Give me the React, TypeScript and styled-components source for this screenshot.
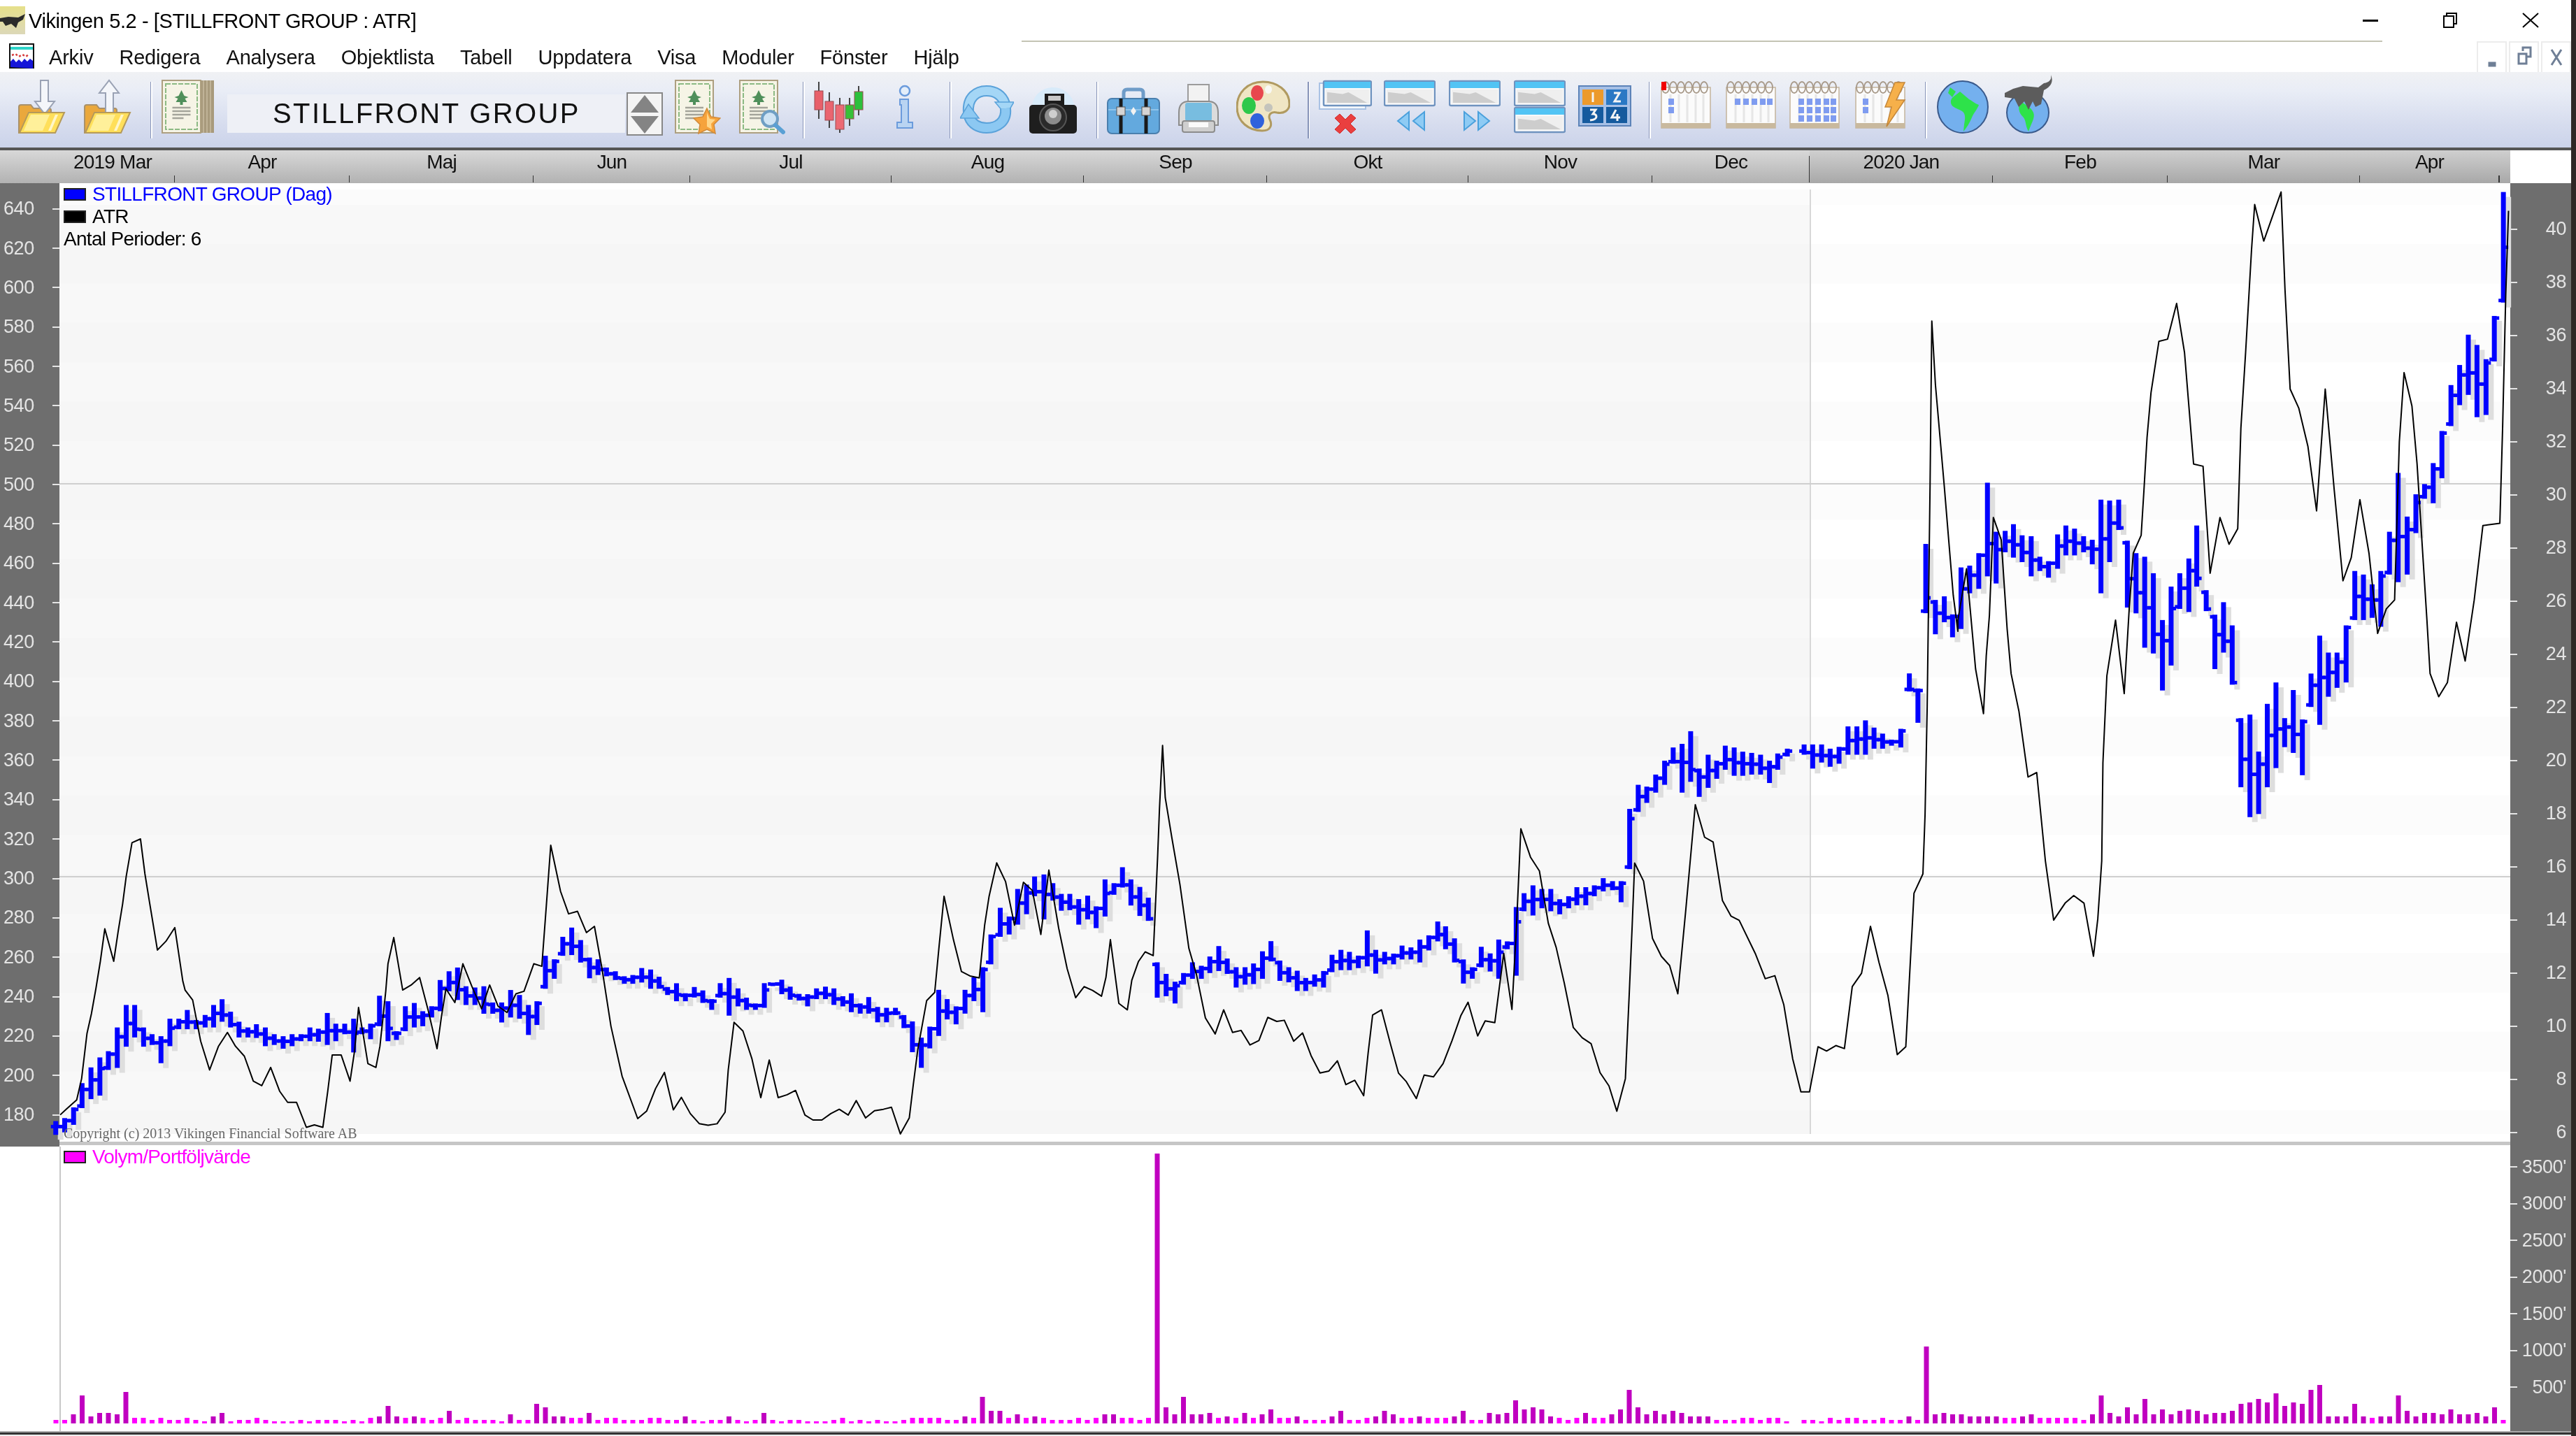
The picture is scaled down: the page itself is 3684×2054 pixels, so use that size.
import React from 'react';
import styled, { createGlobalStyle } from 'styled-components';

const GlobalStyle = createGlobalStyle`
  html, body { margin: 0; padding: 0; background: #2e2826; overflow: hidden; }
  * { box-sizing: border-box; }
`;

const sans = `"Liberation Sans", Arial, sans-serif`;

const Page = styled.div`
  width: 3684px;
  height: 2054px;
  display: flex;
  justify-content: flex-start;
  background: #2e2826;
  overflow: hidden;
  font-family: ${sans};
`;

/* the reference is an upscaled capture, everything in it is slightly soft */
const Win = styled.div`
  position: relative;
  width: 3677px;
  height: 2054px;
  display: flex;
  flex-direction: column;
  background: #fff;
  filter: blur(0.5px);
`;

const TitleBar = styled.div`
  height: 52px;
  padding-top: 6px;
  display: flex;
  align-items: center;
  font-size: 29px;
  letter-spacing: -0.4px;
  color: #000;
`;

const TitleText = styled.span`
  margin: 2px 0 0 5px;
`;

const TitleRule = styled.div`
  position: absolute;
  left: 1461px;
  top: 58px;
  width: 1946px;
  height: 2px;
  background: #c4c4b4;
`;

const WinButtons = styled.div`
  margin-left: auto;
  display: flex;
  align-items: center;
  gap: 92px;
  padding-right: 46px;
`;

const MenuBar = styled.div`
  height: 51px;
  padding: 5px 0 0 13px;
  display: flex;
  align-items: center;
  font-size: 29px;
  letter-spacing: -0.2px;
  color: #111;
`;

const MenuItem = styled.span`
  margin: 4px 0 0 ${p => p.$ml ?? 37}px;
  white-space: nowrap;
`;

const MdiButtons = styled.div`
  margin-left: auto;
  align-self: flex-end;
  display: flex;
  gap: 3px;
`;

const MdiButton = styled.div`
  width: 43px;
  height: 44px;
  border: 2px solid #ececec;
  border-bottom: 0;
  display: flex;
  align-items: center;
  justify-content: center;
`;

const Toolbar = styled.div`
  height: 112px;
  display: flex;
  align-items: flex-start;
  background: linear-gradient(#f0f1f4 0, #e9edf6 25%, #d6dcee 70%, #cbd3ea 100%);
  border-bottom: 4px solid #555;
`;

const ToolIcon = styled.svg`
  flex: none;
  height: 108px;
  margin-left: ${p => p.$ml ?? 0}px;
`;

const ToolSep = styled.div`
  flex: none;
  width: 3px;
  height: 81px;
  margin: 14px 0 0 ${p => p.$ml}px;
  background: linear-gradient(90deg, #8794b8 0 50%, #fff 50%);
`;

const NameField = styled.div`
  flex: none;
  width: 569px;
  height: 55px;
  margin: 32px 0 0 18px;
  padding-left: 65px;
  background: #eef0f6;
  font-size: 40px;
  line-height: 55px;
  letter-spacing: 2.4px;
  color: #111;
  white-space: nowrap;
`;

const DateRow = styled.div`
  height: 47px;
  display: flex;
  background: #fff;
`;

const DateTrack = styled.div`
  width: 3590px;
  display: flex;
  padding-left: 72px;
`;

const DateCell = styled.div`
  position: relative;
  flex: none;
  width: ${p => p.$w}px;
  text-align: center;
  font-size: 28px;
  line-height: 33px;
  letter-spacing: -0.8px;
  color: #111;
  background: ${p =>
    p.$late
      ? 'linear-gradient(#cfcfcf, #a8a8a8)'
      : 'linear-gradient(#d8d8d8, #b2b2b2)'};
  &::after {
    content: '';
    position: absolute;
    right: -1px;
    bottom: 1px;
    width: 2px;
    height: ${p => (p.$year ? 38 : 10)}px;
    background: #333;
  }
`;

const DateLead = styled.div`
  width: 72px;
  margin-left: -72px;
  background: linear-gradient(#d8d8d8, #b2b2b2);
`;

const DateTail = styled.div`
  flex: 1;
  background: linear-gradient(#cfcfcf, #a8a8a8);
`;

const PriceRow = styled.div`
  height: 1378px;
  display: flex;
`;

const Axis = styled.div`
  flex: none;
  width: ${p => p.$w}px;
  background: #6e6e6e;
  color: #e4e4e4;
  overflow: hidden;
  padding-top: ${p => p.$top}px;
  font-size: 27px;
  letter-spacing: -0.4px;
`;

const AxisRow = styled.div`
  height: ${p => p.$h}px;
  display: flex;
  align-items: center;
  justify-content: space-between;
  padding: ${p => (p.$left ? '0 0 0 5px' : '0 7px 0 0')};
`;

const AxisTick = styled.i`
  display: block;
  width: 10px;
  height: 2px;
  background: #e4e4e4;
`;

const PriceMain = styled.div`
  flex: 1;
  display: flex;
  flex-direction: column;
`;

const Plot = styled.div`
  position: relative;
  height: 1371px;
  display: flex;
  padding: 9px 0 11px;
  background: #fff;
`;

const Zone = styled.div`
  width: ${p => p.$w}px;
  border-left: ${p => (p.$edge ? '2px solid #d8d8d8' : '0')};
  background:
    linear-gradient(${p => p.$top}, ${p => p.$top}) 0 0 / 100% 22px no-repeat,
    linear-gradient(${p => p.$a} 50%, ${p => p.$b} 50%) 0 22px / 100% 112.7px repeat-y;
`;

const ChartSvg = styled.svg`
  position: absolute;
  left: 0;
  top: 0;
  width: 100%;
  height: 100%;
  overflow: visible;
`;

const Legend = styled.div`
  position: absolute;
  left: 6px;
  top: 0;
  font-size: 28px;
  line-height: 32px;
  letter-spacing: -0.7px;
`;

const LegendRow = styled.div`
  display: flex;
  align-items: center;
  color: ${p => p.$color};
  white-space: nowrap;
`;

const Swatch = styled.i`
  display: block;
  width: 32px;
  height: 18px;
  margin-right: 9px;
  background: ${p => p.$color};
  border: 2px solid #222;
`;

const Copyright = styled.div`
  position: absolute;
  left: 6px;
  bottom: 1px;
  font-family: "Liberation Serif", serif;
  font-size: 20px;
  line-height: 22px;
  color: #666;
  white-space: nowrap;
`;

const Divider = styled.div`
  height: 5px;
  background: #c6c6c6;
`;

const VolumeRow = styled.div`
  height: 407px;
  display: flex;
`;

const VolumeGutter = styled.div`
  flex: none;
  width: 87px;
  border-right: 2px solid #c8c8c8;
  background: #fff;
`;

const VolumePlot = styled.div`
  position: relative;
  flex: 1;
  background: #fff;
`;

const VolumeLegend = styled.div`
  position: absolute;
  left: 4px;
  top: 0;
  display: flex;
  align-items: center;
  height: 30px;
  font-size: 28px;
  letter-spacing: -0.8px;
  color: #ff00ff;
  white-space: nowrap;
`;

const BottomEdge = styled.div`
  flex: 1;
  border-top: 2px solid #aaa;
  background: linear-gradient(#333 0 3px, #eee 3px);
`;

/* --- data, read off the chart; every run is [x, top, bottom] in the units of its crop --- */

const chunk = (a: number[], n: number) => {
  const out: number[][] = [];
  for (let i = 0; i < a.length; i += n) out.push(a.slice(i, i + n));
  return out;
};

const bars = (fx: number, ox: number, fy: number, oy: number, a: number[]) =>
  chunk(a, 3).map(([x, t, b]) => [ox + x / fx, oy + t / fy, oy + b / fy]);

const line = (fx: number, ox: number, fy: number, oy: number, a: number[]) =>
  chunk(a, 2).map(([x, y]) => [ox + x / fx, oy + y / fy]);

const ohlc = [
  ...bars(1.568, 0, 2.8, 1100, [
    125,1410,1465, 145,1398,1455, 165,1355,1425, 184,1258,1358, 204,1195,1322, 224,1155,1308, 243,1130,1205, 263,1035,1197,
    283,945,1112, 302,945,1075, 322,1035,1112, 341,1062,1105, 361,1070,1178, 381,1000,1110, 401,1000,1042, 420,965,1042,
    440,1005,1042, 460,985,1035, 479,945,1035, 498,922,1012, 517,972,1035, 536,1012,1075, 556,1035,1075, 575,1022,1077,
    595,1035,1110, 615,1062,1105, 635,1070,1120, 655,1062,1110, 675,1062,1090, 695,1035,1090, 714,1040,1092, 734,977,1105,
    753,1020,1090, 773,1020,1062, 793,1000,1135, 812,1035,1062, 831,1020,1082, 851,908,1030, 870,930,1090, 889,1050,1085,
    909,950,1050, 929,937,1035, 948,970,1030, 968,950,995, 987,845,970, 1007,810,890, 1026,795,925, 1045,870,945,
    1065,875,945, 1085,870,980, 1105,935,980, 1125,935,1015, 1145,885,995, 1165,905,1000, 1185,945,1065, 1204,930,1025,
    1223,748,880, 1243,762,840, 1262,672,748, 1282,635,745, 1302,685,775, 1322,755,838, 1341,762,825, 1360,795,830,
    1380,810,845, 1400,830,860, 1419,825,860, 1439,797,855, 1459,803,880, 1478,832,880, 1497,873,905, 1517,858,930,
    1537,898,930, 1557,873,915,
  ]),
  ...bars(1.568, 1000, 2.412, 1000, [
    8,1005,1048, 28,1035,1072, 47,980,1030, 67,962,1092, 87,998,1060, 106,1030,1072, 126,1050,1072, 146,980,1065,
    165,978,990, 185,968,1018, 204,992,1037, 224,1017,1040, 243,1018,1060, 263,998,1035, 283,992,1035, 302,998,1055,
    322,1025,1060, 341,1015,1080, 361,1050,1085, 380,1028,1085, 400,1062,1115, 420,1065,1115, 440,1065,1090, 459,1090,1135,
    478,1112,1218, 498,1168,1272, 517,1130,1205, 537,1003,1162, 556,1035,1105, 576,1060,1122, 596,1003,1085, 616,960,1042,
    636,925,1080, 654,812,915, 675,720,820, 695,750,812, 714,655,778, 734,640,742, 752,612,680, 773,605,760,
    793,635,695, 812,672,730, 831,672,728, 851,690,778, 871,678,760, 890,715,790, 910,622,750, 930,635,675,
    949,580,650, 968,622,712, 988,648,748, 1007,685,765, 1027,908,1030, 1047,948,1025, 1067,975,1050, 1086,945,985,
    1106,908,965, 1126,920,965, 1145,888,945, 1165,852,938, 1184,895,948, 1204,925,995, 1224,925,985, 1243,912,983,
    1263,870,965, 1282,835,905, 1302,902,972, 1322,925,977, 1341,937,1007, 1360,962,1007, 1380,950,992, 1400,938,995,
    1419,882,942, 1439,865,935, 1458,872,935, 1478,885,928, 1498,798,922, 1517,865,947, 1537,872,915, 1557,878,915,
  ]),
  ...bars(1.96, 2000, 1.161, 300, [
    10,1222,1245, 35,1225,1245, 60,1212,1250, 85,1205,1230, 110,1182,1215, 132,1190,1228, 157,1210,1250, 182,1245,1285,
    207,1258,1277, 232,1224,1258, 257,1235,1265, 281,1212,1277, 305,1215,1228, 330,1158,1272, 352,1135,1165, 377,1122,1172,
    402,1128,1160, 427,1128,1165, 452,1145,1170, 477,1140,1160, 500,1125,1155, 525,1125,1155, 549,1122,1140, 574,1110,1132,
    600,1115,1130, 624,1115,1150, 648,995,1095, 672,955,1000, 696,958,985, 721,938,968, 746,915,955, 770,893,920,
    795,887,968, 819,866,950, 843,928,975, 868,905,960, 892,915,945, 916,890,930, 941,893,940, 965,900,940,
    990,902,938, 1015,905,938, 1040,915,952, 1063,903,930, 1090,895,908, 1137,888,905, 1161,888,928, 1186,888,918,
    1210,895,925, 1235,892,920, 1260,858,905, 1285,858,905, 1309,848,905, 1333,860,895, 1357,870,895, 1382,880,890,
    1408,862,893, 1432,770,800, 1456,795,852, 1478,555,670, 1505,648,705, 1530,642,685, 1553,672,710,
  ]),
  ...bars(1.774, 2800, 1.568, 230, [
    8,912,1050, 30,908,970, 53,880,960, 75,722,932, 97,832,948, 120,830,878, 141,815,890, 163,840,900,
    186,842,932, 208,888,920, 230,898,935, 253,838,915, 274,818,885, 296,825,885, 319,842,878, 341,850,905,
    363,760,970, 385,762,900, 408,760,828, 430,852,1002, 452,880,1015, 474,888,1092, 496,925,1105, 519,1030,1188,
    541,955,1132, 563,925,1005, 586,892,1012, 606,818,955, 630,963,1010, 652,1018,1140, 674,990,1103, 696,1042,1175,
    718,1250,1405, 741,1242,1472, 763,1325,1465, 785,1218,1405, 807,1170,1362, 829,1250,1315, 851,1187,1328, 874,1253,1378,
    896,1150,1225, 918,1065,1265, 940,1103,1202, 962,1103,1182, 985,1042,1170, 1007,920,1030, 1029,928,1030, 1051,950,1025,
    1073,920,1045, 1095,832,928, 1117,700,945, 1140,798,928, 1162,748,835, 1184,725,758, 1206,678,768, 1228,606,712,
    1251,503,595, 1273,458,548, 1295,390,525, 1317,413,575, 1340,445,570, 1361,348,450, 1384,70,318,
  ]),
];

const atr = [
  ...line(1.568, 0, 2.8, 1100, [
    135,1385, 150,1360, 172,1325, 183,1240, 195,1060, 205,980, 215,880, 225,770, 235,640, 255,770, 265,650, 275,540,
    283,430, 296,295, 315,280, 325,420, 335,530, 353,725, 372,690, 392,635, 410,850, 415,885, 432,925, 450,1090,
    470,1205, 490,1110, 510,1055, 528,1110, 548,1150, 568,1250, 587,1268, 607,1195, 627,1290, 645,1335, 665,1335, 687,1435,
    705,1425, 724,1435, 735,1290, 745,1145, 765,1145, 785,1250, 795,1130, 804,955, 815,1070, 825,1180, 843,1195, 852,1110,
    865,890, 870,780, 883,675, 903,885, 922,865, 941,835, 960,965, 980,1120, 990,990, 1000,880, 1020,935, 1038,780,
    1058,870, 1080,960, 1098,865, 1117,950, 1137,975, 1157,900, 1175,890, 1197,780, 1215,790, 1225,550, 1235,305, 1257,490,
    1275,580, 1295,570, 1315,655, 1333,630, 1350,800, 1370,1030, 1395,1230, 1430,1400, 1450,1370, 1470,1280, 1490,1215, 1510,1365,
    1528,1315, 1548,1380, 1568,1420,
  ]),
  ...line(1.568, 1000, 2.412, 1000, [
    20,1470, 40,1465, 58,1425, 65,1280, 78,1115, 98,1145, 118,1240, 138,1375, 157,1245, 177,1375, 197,1365, 216,1350,
    237,1435, 255,1452, 275,1452, 295,1430, 314,1415, 334,1435, 352,1385, 373,1445, 393,1420, 413,1415, 431,1408, 451,1500,
    471,1445, 480,1330, 490,1210, 510,1040, 528,1012, 538,850, 549,680, 570,830, 588,940, 607,955, 628,962, 640,780,
    650,680, 667,565, 687,630, 707,780, 727,632, 747,660, 766,812, 784,590, 806,790, 825,930, 844,1030, 863,992,
    882,1005, 902,1025, 912,960, 922,830, 941,1050, 960,1072, 970,970, 985,905, 1000,872, 1018,885, 1028,540, 1032,380,
    1039,160, 1045,340, 1060,480, 1078,640, 1098,860, 1115,950, 1135,1100, 1157,1155, 1176,1072, 1196,1150, 1215,1143, 1235,1193,
    1255,1178, 1275,1098, 1295,1112, 1312,1108, 1333,1180, 1353,1152, 1372,1230, 1392,1290, 1412,1283, 1431,1248, 1450,1330, 1470,1315,
    1490,1368, 1500,1220, 1510,1090, 1530,1072, 1550,1190, 1568,1290,
  ]),
  ...line(1.96, 2000, 1.161, 300, [
    22,1448, 50,1476, 72,1437, 98,1440, 125,1418, 150,1380, 175,1338, 195,1316, 222,1372, 243,1347, 270,1350, 295,1235,
    318,1328, 330,1200, 343,1028, 370,1075, 395,1098, 420,1185, 442,1225, 465,1285, 490,1358, 515,1375, 540,1385, 565,1433,
    590,1455, 612,1497, 636,1443, 647,1300, 655,1190, 662,1085, 687,1115, 712,1210, 737,1240, 760,1255, 783,1302, 805,1165,
    832,988, 858,1042, 882,1050, 908,1147, 932,1173, 955,1180, 1000,1235, 1028,1277, 1055,1272, 1080,1320, 1105,1410, 1128,1465,
    1152,1465, 1176,1390, 1200,1397, 1226,1388, 1250,1393, 1272,1290, 1298,1268, 1323,1190, 1347,1250, 1372,1305, 1398,1403, 1422,1390,
    1445,1135, 1470,1103, 1476,1005, 1482,825, 1490,460, 1495,185, 1505,290, 1530,460, 1555,640, 1568,700,
  ]),
  ...line(1.774, 2800, 1.568, 230, [
    0,1030, 22,915, 45,1140, 65,1240, 72,1110, 80,1020, 90,800, 110,850, 125,1050, 135,1150, 155,1235, 178,1382,
    200,1372, 222,1570, 243,1703, 272,1665, 294,1648, 320,1665, 344,1784, 355,1700, 365,1570, 368,1350, 378,1155, 400,1030, 422,1195,
    435,1000, 445,880, 465,840, 472,740, 480,620, 490,520, 510,405, 532,400, 555,320, 575,430, 598,680, 622,685,
    640,925, 665,800, 688,860, 710,825, 718,600, 730,430, 745,200, 753,98, 776,180, 820,70, 830,290, 843,512,
    865,555, 888,640, 910,785, 932,512, 955,740, 977,942, 998,890, 1020,760, 1043,880, 1065,1060, 1087,1005, 1108,985,
    1120,630, 1132,475, 1152,550, 1165,680, 1190,1030, 1198,1150, 1220,1202, 1242,1170, 1265,1035, 1287,1122, 1310,985, 1332,818,
    1375,813, 1382,600, 1390,300, 1397,112,
  ]),
];

const volumes = [
  5,5,13,40,10,15,15,13,45,8, 8,5,8,5,5,8,5,3,10,15, 3,5,5,8,5,3,3,3,5,3, 5,5,5,3,5,3,8,10,25,10,
  8,10,8,5,8,18,5,8,5,5, 5,3,13,5,5,28,23,10,10,8, 8,15,5,8,8,5,5,5,8,8, 5,5,10,5,3,5,5,10,5,3,
  5,15,5,3,5,5,3,3,3,5, 8,3,5,3,5,3,3,
  5,8,8,8,8,5,5,10,8,38, 18,18,8,13,8,10,8,5,5,5, 8,5,8,13,13,8,8,5,8,386, 23,13,38,13,13,15,8,10,8,15,
  8,13,20,8,8,10,5,5,5,10, 18,5,
  5,8,10,18,13,8,8,10,8,8, 8,10,18,5,5,15,13,15,33,20, 23,20,10,8,5,8,15,8,8,13, 20,48,23,13,18,13,18,15,10,10,
  10,5,5,5,8,8,5,8,8,3, 0,5,5,3,
  8,5,8,8,5,5,8,5,5,10, 5,110,13,15,13,13,10,10,10,10, 8,8,10,13,8,8,8,8,8,5, 13,40,15,10,23,13,35,13,20,13,
  18,20,18,13,15,15,18,28,30,35, 30,43,25,30,28,48,55,10,10,10, 28,10,8,10,10,40,18,10,15,15, 13,20,13,13,15,10,23,5,
];

const priceLabels = Array.from({ length: 24 }, (_, i) => 640 - i * 20);
const atrLabels = Array.from({ length: 18 }, (_, i) => 40 - i * 2);
const volumeLabels = ["3500'", "3000'", "2500'", "2000'", "1500'", "1000'", "500'"];

const months: [string, number, boolean?, boolean?][] = [
  ['2019 Mar', 178], ['Apr', 250], ['Maj', 263], ['Jun', 224], ['Jul', 288], ['Aug', 275], ['Sep', 262], ['Okt', 288],
  ['Nov', 263], ['Dec', 225, false, true], ['2020 Jan', 262, true], ['Feb', 250, true], ['Mar', 275, true], ['Apr', 199, true],
];

const menus = ['Redigera', 'Analysera', 'Objektlista', 'Tabell', 'Uppdatera', 'Visa', 'Moduler', 'Fönster', 'Hjälp'];

/* --- chart drawings --- */

const PriceChart = () => {
  const mids = ohlc.map(b => (b[1] + b[2]) / 2);
  const closes = ohlc.map((b, i) => {
    const next = mids[i + 1] ?? mids[i];
    return Math.min(b[2] - 3, Math.max(b[1] + 3, (mids[i] + next) / 2));
  });
  return (
    <ChartSvg viewBox="85 262 3505 1371">
      <path d="M85 692H3590M85 1254H3590" stroke="#cfcfcf" strokeWidth="2" fill="none" />
      {ohlc.map(([x, t, b], i) => (
        <rect key={i} x={x + 3} y={t + 7} width={8} height={b - t} fill="#dedede" />
      ))}
      {ohlc.map(([x, t, b], i) => {
        const prev = closes[i - 1] ?? closes[i];
        const open = Math.min(b - 3, Math.max(t + 3, prev));
        return (
          <g key={i} fill="#0000ff">
            <rect x={x - 3.5} y={t} width={7} height={b - t} />
            <rect x={x - 7} y={open - 2.5} width={4} height={5} />
            <rect x={x + 3} y={closes[i] - 2.5} width={4} height={5} />
          </g>
        );
      })}
      <polyline
        points={atr.map(p => p.join(',')).join(' ')}
        fill="none"
        stroke="#000"
        strokeWidth="2"
        strokeLinejoin="round"
      />
    </ChartSvg>
  );
};

const VolumeChart = () => (
  <ChartSvg viewBox="87 1640 3503 407">
    {volumes.map((h, i) =>
      h > 0 ? (
        <rect
          key={i}
          x={76.5 + i * 12.5}
          y={2036 - h}
          width={7}
          height={h}
          fill={h >= 10 ? '#c000c0' : '#ff00ff'}
        />
      ) : null,
    )}
  </ChartSvg>
);

/* --- toolbar icons, drawn in toolbar pixels --- */

const Icon = ({ w, ml, children }: { w: number; ml?: number; children: React.ReactNode }) => (
  <ToolIcon $ml={ml} width={w} viewBox={`0 0 ${w} 108`}>
    {children}
  </ToolIcon>
);

const FolderArrow = ({ ml, up }: { ml?: number; up?: boolean }) => (
  <Icon w={69} ml={ml}>
    <path d="M2 87V50q0-3 3-3h14l4 5h22q3 0 3 3v32z" fill="#eaa83c" stroke="#a9916a" strokeWidth="2" />
    <path
      d={up ? 'M32 60V30H23L37 12 51 30H43V60z' : 'M33 12H44V42H53L39 60 25 42H33z'}
      fill="#f4f6fa"
      stroke="#9aa2b4"
      strokeWidth="2"
    />
    <path d="M3 87L16 58H67L54 87z" fill="#ffdf5a" stroke="#b59a5a" strokeWidth="2" />
    <path d="M9 84L19 61H46L36 84z" fill="#fff09a" />
    <path d="M44 84L54 61H58L48 84z" fill="#fff6c8" />
  </Icon>
);

const CertBody = ({ w }: { w: number }) => {
  const c = w / 2 + 1;
  return (
    <>
      <rect x="1" y="12" width={w} height="75" fill="#f6f4e6" stroke="#ad9f80" strokeWidth="2" />
      <rect
        x="6"
        y="17"
        width={w - 10}
        height="65"
        fill="none"
        stroke="#8cba84"
        strokeWidth="2"
        strokeDasharray="7 2"
      />
      <path
        d={`M${c} 26L${c + 4} 34 ${c + 10} 36 ${c + 5} 38 ${c + 8} 43H${c + 2}V47H${c - 2}V43H${c - 8}L${c - 5} 38 ${c - 10} 36 ${c - 4} 34z`}
        fill="#4f8f5a"
      />
      <path
        d={`M${c - 13} 51H${c + 13}M${c - 13} 56H${c + 13}M${c - 13} 61H${c + 13}M${c - 13} 66H${c + 3}`}
        stroke="#a4a49a"
        strokeWidth="2.5"
      />
    </>
  );
};

const Certificate = ({ ml }: { ml?: number }) => (
  <Icon w={76} ml={ml}>
    <rect x="52" y="12" width="23" height="75" fill="#a89a7c" />
    <path d="M60 12V87M65 12V87M70 12V87" stroke="#c8bca0" strokeWidth="1.5" />
    <CertBody w={55} />
  </Icon>
);

const CertStar = ({ ml }: { ml?: number }) => (
  <Icon w={66} ml={ml}>
    <CertBody w={54} />
    <path
      d="M46 52l6 12 13 2-9 9 2 13-12-6-12 6 2-13-9-9 13-2z"
      fill="#f6a33c"
      stroke="#d08a3a"
      strokeWidth="1.5"
    />
    <path d="M46 58l4 9 8 1-6 6 1 8-7-4z" fill="#ffd78a" />
  </Icon>
);

const CertSearch = ({ ml }: { ml?: number }) => (
  <Icon w={66} ml={ml}>
    <CertBody w={54} />
    <circle cx="44" cy="67" r="11" fill="#cfe4f4" stroke="#6f9fc4" strokeWidth="4" />
    <path d="M52 76L63 86" stroke="#5aa0d4" strokeWidth="6" strokeLinecap="round" />
  </Icon>
);

const Spinner = () => (
  <Icon w={52} ml={2}>
    <rect x="1" y="30" width="50" height="60" fill="#f4f4f4" stroke="#888" strokeWidth="2" />
    <path d="M26 33L46 58H6z" fill="#848484" />
    <path d="M26 88L46 63H6z" fill="#848484" />
  </Icon>
);

const Candles = ({ ml }: { ml?: number }) => {
  const c: [number, number, number, number, number, string][] = [
    [8, 14, 67, 27, 54, '#e8606a'],
    [23, 29, 80, 42, 69, '#ea6570'],
    [38, 37, 87, 47, 82, '#ec6a74'],
    [52, 37, 77, 47, 67, '#38c038'],
    [65, 20, 62, 28, 54, '#2cc03c'],
  ];
  return (
    <Icon w={76} ml={ml}>
      {c.map(([x, a, b, t, u, f]) => (
        <g key={x}>
          <path d={`M${x} ${a}V${b}`} stroke="#444" strokeWidth="2" />
          <rect x={x - 6} y={t} width="12" height={u - t} fill={f} stroke="#9a4a50" strokeWidth="1" />
        </g>
      ))}
    </Icon>
  );
};

const InfoMark = ({ ml }: { ml?: number }) => (
  <Icon w={30} ml={ml}>
    <circle cx="14" cy="27" r="7" fill="#e4eefa" stroke="#6b9bdc" strokeWidth="2.5" />
    <path
      d="M7 39H19V72H25V80H3V72H9V47H7z"
      fill="#b9d4f2"
      stroke="#6b9bdc"
      strokeWidth="2"
    />
  </Icon>
);

const Refresh = ({ ml }: { ml?: number }) => (
  <Icon w={77} ml={ml}>
    <path d="M12 58C10 36 24 27 38 27c12 0 22 6 26 18" fill="none" stroke="#5aa2da" strokeWidth="16" />
    <path d="M12 58C10 36 24 27 38 27c12 0 22 6 26 18" fill="none" stroke="#a4d6f6" strokeWidth="12" />
    <path d="M50 43H77L66 62z" fill="#a4d6f6" stroke="#5aa2da" strokeWidth="1.5" />
    <path d="M65 52c2 20-13 28-27 28-11 0-21-5-25-16" fill="none" stroke="#5aa2da" strokeWidth="16" />
    <path d="M65 52c2 20-13 28-27 28-11 0-21-5-25-16" fill="none" stroke="#8cc8f2" strokeWidth="12" />
    <path d="M0 66H27L12 46z" fill="#8cc8f2" stroke="#5aa2da" strokeWidth="1.5" />
  </Icon>
);

const Camera = ({ ml }: { ml?: number }) => (
  <Icon w={71} ml={ml}>
    <path d="M6 48C8 32 22 22 36 22s28 10 30 26z" fill="#d8ebfa" />
    <rect x="24" y="31" width="28" height="16" fill="#1c1c1c" />
    <rect x="29" y="34" width="18" height="7" fill="#c8c8c8" />
    <rect x="2" y="47" width="68" height="41" rx="5" fill="#1e1e1e" />
    <circle cx="36" cy="65" r="19" fill="#2a2a2a" stroke="#555" strokeWidth="2" />
    <circle cx="36" cy="63" r="12" fill="#8c8c8c" />
    <circle cx="36" cy="60" r="6" fill="#cfcfcf" />
  </Icon>
);

const Briefcase = ({ ml }: { ml?: number }) => (
  <Icon w={76} ml={ml}>
    <path d="M24 38V30q0-5 5-5h18q5 0 5 5v8" fill="none" stroke="#6f9cc8" strokeWidth="5" />
    <rect x="1" y="38" width="74" height="50" rx="6" fill="#63a9de" stroke="#4a7fae" strokeWidth="2" />
    <path d="M2 54H74" stroke="#8fc4ea" strokeWidth="2" />
    <path d="M20 38V88M56 38V88" stroke="#1a1a1a" strokeWidth="5" />
    <rect x="14" y="50" width="12" height="12" fill="#d4d4d4" stroke="#555" />
    <rect x="50" y="50" width="12" height="12" fill="#d4d4d4" stroke="#555" />
    <path d="M38 50l4 6-4 6-4-6z" fill="#f2f2f2" />
  </Icon>
);

const Printer = ({ ml }: { ml?: number }) => (
  <Icon w={60} ml={ml}>
    <rect x="15" y="18" width="30" height="26" fill="#f2f2f2" stroke="#9c9c9c" strokeWidth="2" />
    <path d="M2 58q0-16 14-16h28q14 0 14 16v18H2z" fill="#dcdcdc" stroke="#8c8c8c" strokeWidth="2" />
    <rect x="11" y="44" width="38" height="26" rx="3" fill="#78bde0" />
    <rect x="7" y="70" width="46" height="16" rx="3" fill="#cfcfcf" stroke="#8c8c8c" strokeWidth="2" />
    <rect x="16" y="72" width="28" height="7" fill="#fafafa" />
  </Icon>
);

const Palette = ({ ml }: { ml?: number }) => (
  <Icon w={77} ml={ml}>
    <path
      d="M38 14C16 14 1 30 1 50c0 22 18 34 36 34 14 0 14-10 11-16-3-7 2-12 10-10 10 2 18-3 18-12C76 26 58 14 38 14z"
      fill="#f0e6c4"
      stroke="#b09a60"
      strokeWidth="3"
    />
    <ellipse cx="30" cy="30" rx="9" ry="11" fill="#e8474e" />
    <ellipse cx="46" cy="25" rx="5" ry="6" fill="#f8f8f4" />
    <ellipse cx="18" cy="48" rx="10" ry="12" fill="#2ec84a" />
    <ellipse cx="46" cy="51" rx="6" ry="6" fill="#c4c4bc" />
    <ellipse cx="30" cy="70" rx="10" ry="11" fill="#2f62dc" />
  </Icon>
);

const MiniWindow = ({ x, y, w, h }: { x: number; y: number; w: number; h: number }) => (
  <g transform={`translate(${x} ${y})`}>
    <rect x="1" y="1" width={w - 2} height={h - 2} rx="2" fill="#fafafa" stroke="#6f93bf" strokeWidth="2.5" />
    <rect x="2" y="2" width={w - 4} height="9" fill="#52c4f4" />
    <rect x="4" y="13" width={w - 8} height={h - 17} fill="#efefef" />
    <path
      d={`M6 ${h - 5}V${h * 0.45}L${w * 0.4} ${h * 0.53} ${w * 0.52} ${h * 0.46}L${w - 7} ${h - 5}z`}
      fill="#cdcdcd"
    />
  </g>
);

const WindowClose = ({ ml }: { ml?: number }) => (
  <Icon w={76} ml={ml}>
    <rect x="1" y="16" width="66" height="37" fill="#f4f7fc" stroke="#a9c2e4" strokeWidth="2" />
    <MiniWindow x={6} y={12} w={70} h={37} />
    <path d="M30 60l8 8 8-8 7 6-8 8 8 8-7 6-8-8-8 8-7-6 8-8-8-8z" fill="#ea3f3f" stroke="#d02a2a" />
  </Icon>
);

const WindowRewind = ({ ml }: { ml?: number }) => (
  <Icon w={74} ml={ml}>
    <MiniWindow x={0} y={12} w={74} h={37} />
    <path d="M20 70L36 57V83z M42 70L58 57V83z" fill="#8ecbf4" stroke="#4aa0dc" strokeWidth="2" />
  </Icon>
);

const WindowForward = ({ ml }: { ml?: number }) => (
  <Icon w={74} ml={ml}>
    <MiniWindow x={0} y={12} w={74} h={37} />
    <path d="M38 70L22 57V83z M58 70L42 57V83z" fill="#8ecbf4" stroke="#4aa0dc" strokeWidth="2" />
  </Icon>
);

const WindowPair = ({ ml }: { ml?: number }) => (
  <Icon w={74} ml={ml}>
    <MiniWindow x={0} y={12} w={74} h={37} />
    <MiniWindow x={0} y={50} w={74} h={37} />
  </Icon>
);

const FourPanes = ({ ml }: { ml?: number }) => (
  <Icon w={76} ml={ml}>
    <rect x="1" y="20" width="74" height="57" fill="#a7c0e6" stroke="#5c83b8" strokeWidth="2" />
    <rect x="6" y="25" width="30" height="22" fill="#ec9a2c" />
    <rect x="40" y="25" width="30" height="22" fill="#2a78c4" />
    <rect x="6" y="50" width="30" height="23" fill="#155a9e" />
    <rect x="40" y="50" width="30" height="23" fill="#155a9e" />
    <path d="M21 29V43M51 30h8l-7 12h9M17 54h8l-4 6q5 0 5 4t-9 5M54 54l-6 11h12M56 60V70" fill="none" stroke="#f4f4f4" strokeWidth="3" />
  </Icon>
);

const Calendar = ({
  ml,
  mark,
  bolt,
  cells,
}: {
  ml?: number;
  mark?: boolean;
  bolt?: boolean;
  cells: [number, number][];
}) => (
  <Icon w={76} ml={ml}>
    <rect x="2" y="22" width="70" height="58" fill="#fbfbfb" stroke="#c4b49c" strokeWidth="1.5" />
    <path d="M15 32V72M27 32V72M39 32V72M51 32V72M62 32V72" stroke="#e6e6e6" strokeWidth="3" />
    <rect x="2" y="73" width="70" height="7" fill="#c9b99e" />
    {[8, 19, 30, 41, 52, 63].map(x => (
      <ellipse key={x} cx={x} cy="22" rx="5" ry="8" fill="none" stroke="#a89a8a" strokeWidth="1.8" />
    ))}
    {cells.map(([x, y]) => (
      <rect key={`${x}-${y}`} x={x} y={y} width="8" height="9" fill="#7f9cf0" />
    ))}
    {mark && <rect x="2" y="14" width="7" height="12" fill="#f00000" />}
    {bolt && (
      <path d="M58 15L44 50H53L46 78 72 40H60L72 15z" fill="#f6b04a" stroke="#c4873a" strokeWidth="1.5" />
    )}
  </Icon>
);

const grid = (cols: number[], rows: number[]) =>
  cols.flatMap(x => rows.map(y => [x, y] as [number, number]));

const Globe = ({ ml }: { ml?: number }) => (
  <Icon w={76} ml={ml}>
    <ellipse cx="38" cy="50" rx="36" ry="37" fill="#74b0ee" stroke="#3a5a8c" strokeWidth="2" />
    <path d="M34 28c-6 6-14 8-13 16 1 7 10 8 16 12 6 4 4 12 3 19l-1 10c4-5 9-12 12-20 3-7 8-12 10-18-6-2-10-6-14-8z" fill="#2ee24a" />
    <path d="M20 22l8 6-5 8-6-6z" fill="#2ee24a" />
  </Icon>
);

const BullGlobe = ({ ml }: { ml?: number }) => (
  <Icon w={74} ml={ml}>
    <ellipse cx="35" cy="58" rx="30" ry="29" fill="#74b0ee" stroke="#3a5a8c" strokeWidth="2" />
    <path d="M25 40c4 8 14 8 18 18 3 7-3 15-7 27-5-9-3-16-8-21-6-6-8-14-3-24z" fill="#2ee24a" />
    <path
      d="M2 30L14 24 28 20 50 22 58 16Q70 14 68 4 74 18 58 26L54 46 46 50 42 42 36 54 30 42 22 50 16 38 2 36z"
      fill="#5c5c5c"
    />
  </Icon>
);

/* --- window chrome glyphs --- */

const TitleLogo = () => (
  <svg width="36" height="40" viewBox="0 0 36 40">
    <defs>
      <linearGradient id="logoBg" x1="0" y1="0" x2="0" y2="1">
        <stop offset="0" stopColor="#e6e08a" />
        <stop offset="1" stopColor="#dcd8b8" />
      </linearGradient>
    </defs>
    <rect width="36" height="40" fill="url(#logoBg)" />
    <path d="M0 17L12 15 26 16 36 11 33 19 26 23 23 31 16 25 8 28 4 22 0 22z" fill="#2b2b2b" />
  </svg>
);

const MenuLogo = () => (
  <svg width="36" height="36" viewBox="0 0 36 36">
    <rect width="36" height="36" fill="#fff" />
    <rect x="1" y="1" width="34" height="34" fill="none" stroke="#111" strokeWidth="2" />
    <rect x="2" y="5" width="32" height="4" fill="#2dd4c8" />
    <path d="M4 17l5-2 5 4 5-3 5 3 5-4" stroke="#d63a3a" strokeWidth="2.5" strokeDasharray="3 3" fill="none" />
    <path d="M2 34V26l4-4 4 5 4-4 4 4 4-5 4 4 4-4 4 3v11z" fill="#1616d8" />
  </svg>
);

const GlyphMin = () => (
  <svg width="22" height="6" viewBox="0 0 22 6"><rect y="2" width="22" height="3" fill="#000" /></svg>
);

const GlyphRestore = () => (
  <svg width="22" height="22" viewBox="0 0 22 22">
    <path d="M6 4V1H20V16H16" fill="none" stroke="#000" strokeWidth="2" />
    <rect x="2" y="5" width="14" height="16" fill="#fff" stroke="#000" strokeWidth="2" />
  </svg>
);

const GlyphClose = () => (
  <svg width="24" height="22" viewBox="0 0 24 22">
    <path d="M1 1L23 21M23 1L1 21" stroke="#000" strokeWidth="2" />
  </svg>
);

const MdiGlyph = ({ d, fill }: { d: string; fill?: string }) => (
  <svg width="26" height="34" viewBox="0 0 26 34">
    <path d={d} fill={fill ?? 'none'} stroke="#6f7f96" strokeWidth="3" />
  </svg>
);

const App = () => (
  <Page>
    <GlobalStyle />
    <Win>
      <TitleRule />
      <TitleBar>
        <TitleLogo />
        <TitleText>Vikingen 5.2 - [STILLFRONT GROUP : ATR]</TitleText>
        <WinButtons>
          <GlyphMin />
          <GlyphRestore />
          <GlyphClose />
        </WinButtons>
      </TitleBar>

      <MenuBar>
        <MenuLogo />
        <MenuItem $ml={21}>Arkiv</MenuItem>
        {menus.map(m => (
          <MenuItem key={m}>{m}</MenuItem>
        ))}
        <MdiButtons>
          <MdiButton>
            <MdiGlyph d="M9 25H17V29H9z" fill="#6f7f96" />
          </MdiButton>
          <MdiButton>
            <MdiGlyph d="M11 8V3H22V16H17M5 12H16V26H5z" />
          </MdiButton>
          <MdiButton>
            <MdiGlyph d="M6 6L20 28M20 6L6 28" />
          </MdiButton>
        </MdiButtons>
      </MenuBar>

      <Toolbar>
        <FolderArrow ml={25} />
        <FolderArrow ml={25} up />
        <ToolSep $ml={27} />
        <Certificate ml={13} />
        <NameField>STILLFRONT GROUP</NameField>
        <Spinner />
        <CertStar ml={17} />
        <CertSearch ml={26} />
        <ToolSep $ml={25} />
        <Candles ml={12} />
        <InfoMark ml={41} />
        <ToolSep $ml={48} />
        <Refresh ml={12} />
        <Camera ml={20} />
        <ToolSep $ml={27} />
        <Briefcase ml={12} />
        <Printer ml={25} />
        <Palette ml={24} />
        <ToolSep $ml={25} />
        <WindowClose ml={13} />
        <WindowRewind ml={17} />
        <WindowForward ml={19} />
        <WindowPair ml={19} />
        <FourPanes ml={18} />
        <ToolSep $ml={25} />
        <Calendar ml={13} mark cells={grid([12], [38, 50])} />
        <Calendar ml={17} cells={grid([14, 26, 38, 50, 60], [38])} />
        <Calendar ml={15} cells={grid([14, 26, 38, 50, 60], [38, 50, 62])} />
        <Calendar ml={18} bolt cells={grid([12], [38, 50])} />
        <ToolSep $ml={25} />
        <Globe ml={13} />
        <BullGlobe ml={20} />
      </Toolbar>

      <DateRow>
        <DateTrack>
          <DateLead />
          {months.map(([label, w, late, year]) => (
            <DateCell key={label + w} $w={w} $late={late} $year={year}>
              {label}
            </DateCell>
          ))}
          <DateTail />
        </DateTrack>
      </DateRow>

      <PriceRow>
        <Axis $w={85} $top={8.5}>
          {priceLabels.map(v => (
            <AxisRow key={v} $h={56.35} $left>
              {v}
              <AxisTick />
            </AxisRow>
          ))}
        </Axis>
        <PriceMain>
          <Plot>
            <Zone $w={2503} $top="#fbfbfb" $a="#f8f8f8" $b="#f6f6f6" />
            <Zone $w={1002} $edge $top="#fdfdfd" $a="#ffffff" $b="#fcfcfc" />
            <PriceChart />
            <Legend>
              <LegendRow $color="#0000ff">
                <Swatch $color="#0000ff" />
                STILLFRONT GROUP (Dag)
              </LegendRow>
              <LegendRow $color="#000">
                <Swatch $color="#000" />
                ATR
              </LegendRow>
              <LegendRow $color="#000">Antal Perioder: 6</LegendRow>
            </Legend>
            <Copyright>Copyright (c) 2013 Vikingen Financial Software AB</Copyright>
          </Plot>
          <Divider />
        </PriceMain>
        <Axis $w={87} $top={27.5}>
          {atrLabels.map(v => (
            <AxisRow key={v} $h={76}>
              <AxisTick />
              {v}
            </AxisRow>
          ))}
        </Axis>
      </PriceRow>

      <VolumeRow>
        <VolumeGutter />
        <VolumePlot>
          <VolumeChart />
          <VolumeLegend>
            <Swatch $color="#ff00ff" />
            Volym/Portföljvärde
          </VolumeLegend>
        </VolumePlot>
        <Axis $w={87} $top={3}>
          {volumeLabels.map(v => (
            <AxisRow key={v} $h={52.5}>
              <AxisTick />
              {v}
            </AxisRow>
          ))}
        </Axis>
      </VolumeRow>
      <BottomEdge />
    </Win>
  </Page>
);

export default App;
